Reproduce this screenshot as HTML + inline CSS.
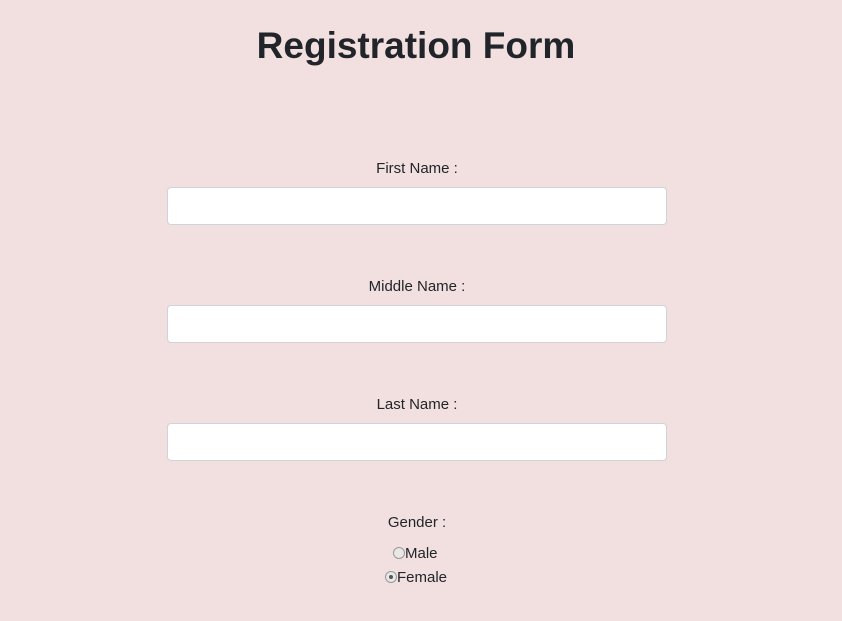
<!DOCTYPE html>
<html><head><style>
body{margin:0;width:842px;height:621px;background:#f2e0e1;font-family:"Liberation Sans",sans-serif;color:#212529;position:relative;overflow:hidden}
h1{position:absolute;top:23px;left:-5px;width:842px;text-align:center;margin:0;font-size:37px;font-weight:bold;line-height:46px;color:#212529}
.l{position:absolute;left:0;width:834px;text-align:center;font-size:15px;line-height:20px}
.i{position:absolute;left:167px;width:498px;height:36px;background:#fff;border:1px solid #ced4da;border-radius:4px}
.r{position:absolute;font-size:15px;line-height:18px}
.c{display:inline-block;width:12px;height:12px;border:1px solid #999;border-radius:50%;background:#e8e8e8;vertical-align:-1px;box-sizing:border-box;position:relative}
.c.on::after{content:"";position:absolute;left:3px;top:3px;width:4px;height:4px;border-radius:50%;background:#555}
</style></head><body>
<h1>Registration Form</h1>
<div class="l" style="top:159px">First Name :</div>
<div class="i" style="top:187px"></div>
<div class="l" style="top:277px">Middle Name :</div>
<div class="i" style="top:305px"></div>
<div class="l" style="top:395px">Last Name :</div>
<div class="i" style="top:423px"></div>
<div class="l" style="top:513px">Gender :</div>
<div class="r" style="left:393px;top:545px"><span class="c"></span>Male</div>
<div class="r" style="left:385px;top:569px"><span class="c on"></span>Female</div>
</body></html>
